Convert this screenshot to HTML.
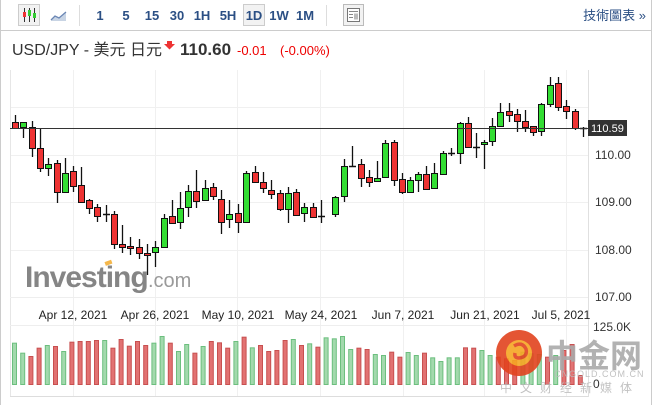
<!DOCTYPE html>
<html><head><meta charset="utf-8"><style>
body{margin:0;width:652px;height:405px;overflow:hidden;background:#fff;font-family:"Liberation Sans","Noto Sans CJK TC",sans-serif;}
svg{position:absolute;left:0;top:0}
</style></head><body>
<svg id="s" width="652" height="405" xmlns="http://www.w3.org/2000/svg" font-family="Liberation Sans, Noto Sans CJK TC, sans-serif">
<rect x="0" y="0" width="652" height="405" fill="#fff"/>
<line x1="0.5" y1="0" x2="0.5" y2="405" stroke="#ccc"/>
<line x1="651.5" y1="0" x2="651.5" y2="405" stroke="#ccc"/>
<line x1="0" y1="30.5" x2="652" y2="30.5" stroke="#ccc"/>
<rect x="18.5" y="4.5" width="21" height="21" fill="#f2f2f2" stroke="#ccc"/>
<g stroke="#333" stroke-width="1"><line x1="24.5" y1="8" x2="24.5" y2="22"/><line x1="29.5" y1="8" x2="29.5" y2="22"/><line x1="34.5" y1="8" x2="34.5" y2="22"/></g>
<rect x="23" y="12" width="3" height="5" fill="#e33"/><rect x="28" y="10" width="3" height="6" fill="#3c3"/><rect x="33" y="13" width="3" height="5" fill="#3c3"/>
<path d="M51 21 L55 16 L59 18 L66 12 L66 21 Z" fill="#c8d4e4"/><path d="M51 20 L55 16 L59 18 L66 12" stroke="#6a86b4" fill="none" stroke-width="1.3"/>
<line x1="79.5" y1="5" x2="79.5" y2="26" stroke="#ddd"/>
<rect x="243.5" y="4.5" width="21" height="21" fill="#f2f2f2" stroke="#ccc"/>
<g fill="#2b4f84" font-size="13" font-weight="bold" text-anchor="middle">
<text x="100" y="20">1</text><text x="126" y="20">5</text><text x="152" y="20">15</text><text x="177" y="20">30</text><text x="202" y="20">1H</text><text x="228" y="20">5H</text><text x="254" y="20">1D</text><text x="279" y="20">1W</text><text x="305" y="20">1M</text>
</g>
<line x1="326.5" y1="5" x2="326.5" y2="26" stroke="#ddd"/>
<rect x="343.5" y="4.5" width="20" height="21" fill="#f2f2f2" stroke="#bbb"/>
<rect x="347.5" y="8.5" width="12" height="13" fill="#fff" stroke="#777"/>
<g stroke="#888"><line x1="349" y1="11.5" x2="358" y2="11.5"/><line x1="349" y1="14.5" x2="353" y2="14.5"/><line x1="349" y1="17.5" x2="353" y2="17.5"/></g><rect x="354" y="13.5" width="4" height="6" fill="#bbb"/>
<text x="646" y="20" text-anchor="end" fill="#2b4f84" font-size="13">技術圖表 »</text>
<text x="12" y="55" font-size="16" fill="#333">USD/JPY - 美元 日元</text>
<path d="M167 41 h5 v3 h3 l-5.5 5.5 l-5.5 -5.5 h3 z" fill="#e33"/>
<text x="180" y="55" font-size="17" font-weight="bold" fill="#333">110.60</text>
<text x="237" y="55" font-size="13" fill="#e00">-0.01</text>
<text x="280" y="55" font-size="13" fill="#e00">(-0.00%)</text>
<g id="grid" stroke="#f0f0f0"></g>
<line x1="10.5" y1="70" x2="10.5" y2="397" stroke="#e6e6e6"/>
<line x1="588.5" y1="70" x2="588.5" y2="397" stroke="#e0e0e0"/>
<line x1="10" y1="297.5" x2="588" y2="297.5" stroke="#eee"/>
<line x1="10" y1="325.5" x2="588" y2="325.5" stroke="#eee"/>
<line x1="10" y1="396.5" x2="588" y2="396.5" stroke="#ddd"/>
<g font-size="12" fill="#333">
<text x="595" y="159">110.00</text><text x="595" y="206">109.00</text><text x="595" y="254">108.00</text><text x="595" y="301">107.00</text>
<text x="593" y="331">125.0K</text><text x="593" y="388">0</text>
</g>
<g font-size="12" fill="#222" text-anchor="middle">
<text x="73" y="319">Apr 12, 2021</text><text x="155" y="319">Apr 26, 2021</text><text x="238" y="319">May 10, 2021</text><text x="321" y="319">May 24, 2021</text><text x="403" y="319">Jun 7, 2021</text><text x="485" y="319">Jun 21, 2021</text><text x="561" y="319">Jul 5, 2021</text>
</g>
<text x="25" y="287" font-size="30" font-weight="bold" fill="#858585" letter-spacing="-1">Investing</text>
<rect x="105" y="261" width="7" height="4" fill="#f5b74a" transform="rotate(-20 108 263)"/>
<text x="148" y="287" font-size="20" fill="#9a9a9a">.com</text>
<g id="vol"></g>
<g id="c"></g>
<line x1="10" y1="128.5" x2="588" y2="128.5" stroke="#333"/>
<rect x="588" y="120" width="39" height="16" fill="#333"/>
<text x="591" y="132" font-size="11" fill="#fff">110.59</text>
<g opacity="0.9">
<circle cx="519" cy="353" r="23" fill="#e2431f"/>
<circle cx="519" cy="353" r="13" fill="#f6a623"/>
<path d="M514 346 q8 -5 12 3 q2 8 -7 9 q-5 0 -4 -5" stroke="#e2431f" stroke-width="3.5" fill="none"/>
<text x="546" y="367" font-size="32" font-weight="bold" fill="#aaa">中金网</text>
<text x="554" y="377" font-size="9" fill="#bbb" letter-spacing="1">CNGOLD.COM.CN</text>
<text x="500" y="392" font-size="12" fill="#bbb" letter-spacing="8">中文财经新媒体</text>
</g>
</svg>
<script>
var NS="http://www.w3.org/2000/svg";
function el(p,t,a){var e=document.createElementNS(NS,t);for(var k in a)e.setAttribute(k,a[k]);p.appendChild(e);return e;}
var g=document.getElementById('grid');
[73,155,237,320,403,484,566].forEach(function(x){el(g,'line',{x1:x+.5,y1:70,x2:x+.5,y2:397});});
[107,155,202,250].forEach(function(y){el(g,'line',{x1:10,y1:y+.5,x2:588,y2:y+.5});});
var C=[[15,'r',122,128,115,129],[23,'g',122,127,122,138],[32,'r',127,148,121,157],[40,'r',148,168,129,172],[48,'g',164,168,158,176],[57,'r',163,192,160,203],[65,'g',173,192,158,193],[73,'r',171,186,166,192],[81,'r',185,202,167,202],[89,'r',200,208,199,214],[97,'r',207,216,204,222],[106,'d',214,214,205,222],[114,'r',214,244,211,249],[122,'r',244,247,225,253],[130,'r',246,248,237,255],[139,'r',247,253,239,259],[147,'r',253,255,244,275],[155,'g',247,252,241,267],[164,'g',218,247,214,247],[172,'r',216,223,200,223],[180,'g',208,222,192,229],[188,'g',191,207,185,217],[196,'r',191,201,170,208],[205,'g',188,200,180,201],[213,'r',187,196,183,200],[221,'r',199,222,190,234],[229,'g',214,219,200,228],[238,'r',213,222,204,233],[246,'g',173,222,171,222],[255,'r',172,182,166,183],[263,'r',182,188,172,193],[271,'r',190,194,180,199],[280,'r',193,209,190,211],[288,'g',193,209,187,223],[296,'r',192,215,189,216],[304,'g',207,213,203,222],[313,'r',207,217,203,217],[321,'d',216,216,200,223],[335,'g',197,214,196,217],[344,'g',166,196,159,202],[352,'d',166,166,146,167],[361,'r',164,178,159,187],[369,'r',177,182,170,187],[377,'g',178,181,161,182],[385,'g',143,177,140,177],[394,'r',142,180,140,186],[402,'r',179,192,173,194],[410,'g',180,192,177,192],[418,'g',174,180,172,192],[426,'r',174,189,166,189],[434,'g',173,188,163,188],[443,'g',153,174,151,174],[451,'d',153,153,148,156],[460,'g',123,153,122,164],[468,'r',123,147,117,147],[476,'d',147,147,133,158],[484,'g',142,144,140,169],[492,'g',126,141,118,146],[500,'g',112,126,103,126],[509,'r',111,115,103,122],[517,'r',114,121,109,132],[525,'r',121,127,110,132],[533,'r',126,132,126,136],[541,'g',104,131,103,136],[550,'g',85,104,77,107],[558,'r',83,107,77,111],[566,'r',106,111,100,119],[575,'r',111,128,109,130],[583,'d',128,128,127,137]];
var cg=document.getElementById('c');
C.forEach(function(c){var x=c[0];
el(cg,'line',{x1:x+.5,y1:c[4],x2:x+.5,y2:c[5],stroke:'#111','stroke-width':1.3});
if(c[1]=='d'){el(cg,'line',{x1:x-3,y1:c[2]+.5,x2:x+4,y2:c[2]+.5,stroke:'#111','stroke-width':1.5});}
else el(cg,'rect',{x:x-2.5,y:c[2]+.5,width:6,height:Math.max(2,c[3]-c[2]),fill:c[1]=='g'?'#33dd33':'#ee3333',stroke:'#111','stroke-width':1});
});
var V="g158 g188 r198 r173 g165 r168 g183 r155 r153 r153 r150 g150 r173 r147 r167 r153 r165 g158 g138 r158 g183 g162 r188 g168 r153 r157 r173 g153 r140 g172 r165 r183 r180 r150 g147 r165 g160 r170 g142 g145 g138 g177 r173 r177 g192 g195 r185 r200 g186 g195 r188 g202 g213 g202 g202 r172 r173 g180 g195 r200 r205 r210 g185 g190 g192 r200 g195 r180 r162 r255".split(' ');
var vg=document.getElementById('vol');
V.forEach(function(v,i){var x=12+i*8.2,t=290+parseInt(v.slice(1))/3;var gr=v[0]=='g';
el(vg,'rect',{x:x+.5,y:t+.5,width:4,height:384-t,fill:gr?'#a3d9ad':'#e27272',stroke:gr?'#6cbf7e':'#c85050','stroke-width':1});});
</script>
</body></html>
